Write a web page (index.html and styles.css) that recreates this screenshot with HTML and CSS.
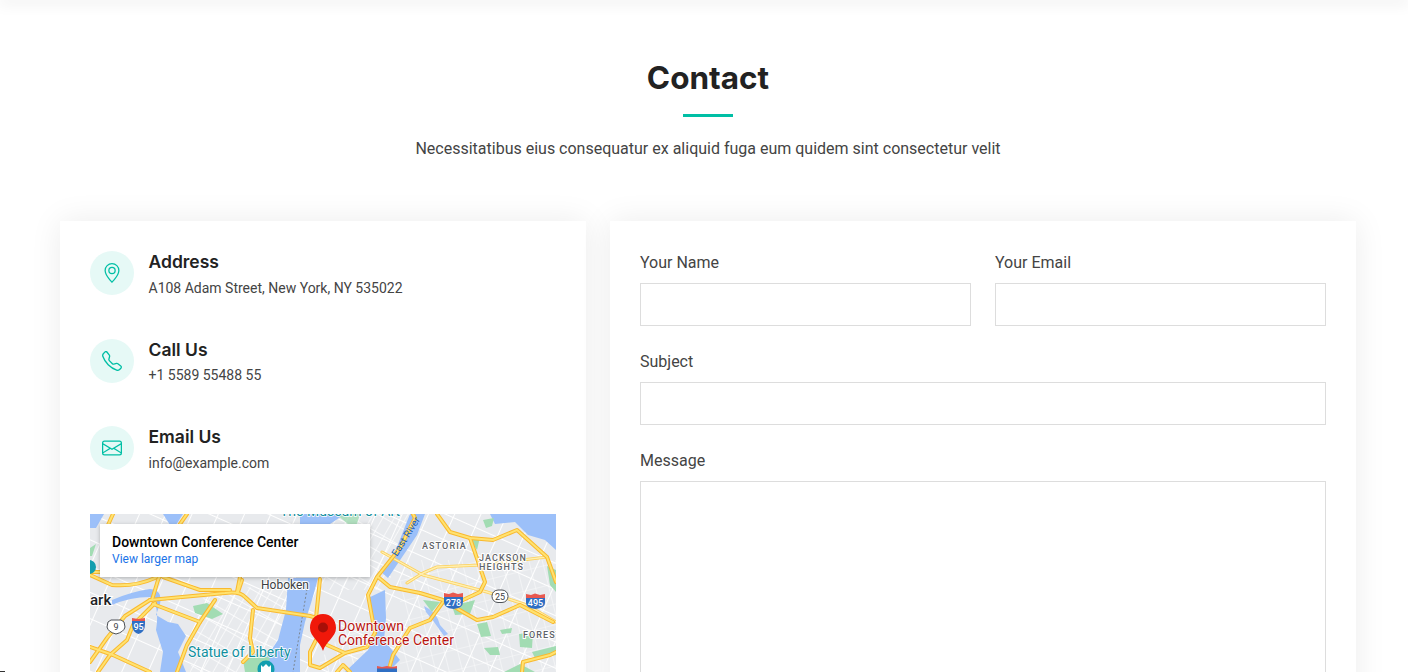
FILE: index.html
```html
<!DOCTYPE html>
<html lang="en">
<head>
<meta charset="utf-8">
<title>Contact</title>
<link rel="stylesheet" href="styles.css">
</head>
<body>
<div class="topbar"></div>
<section class="contact">
  <header class="section-title">
    <h2>Contact</h2>
    <p>Necessitatibus eius consequatur ex aliquid fuga eum quidem sint consectetur velit</p>
  </header>
  <div class="columns">
    <div class="card info">
      <div class="info-item">
        <span class="icon-circle"><svg viewBox="0 0 16 16" class="icon"><path d="M12.166 8.94c-.524 1.062-1.234 2.12-1.96 3.07A31.493 31.493 0 0 1 8 14.58a31.481 31.481 0 0 1-2.206-2.57c-.726-.95-1.436-2.008-1.96-3.07C3.304 7.867 3 6.862 3 6a5 5 0 0 1 10 0c0 .862-.305 1.867-.834 2.94zM8 16s6-5.686 6-10A6 6 0 0 0 2 6c0 4.314 6 10 6 10z"/><path d="M8 8a2 2 0 1 1 0-4 2 2 0 0 1 0 4zm0 1a3 3 0 1 0 0-6 3 3 0 0 0 0 6z"/></svg></span>
        <div><h3>Address</h3><p>A108 Adam Street, New York, NY 535022</p></div>
      </div>
      <div class="info-item">
        <span class="icon-circle"><svg viewBox="0 0 16 16" class="icon"><path d="M3.654 1.328a.678.678 0 0 0-1.015-.063L1.605 2.3c-.483.484-.661 1.169-.45 1.77a17.568 17.568 0 0 0 4.168 6.608 17.569 17.569 0 0 0 6.608 4.168c.601.211 1.286.033 1.77-.45l1.034-1.034a.678.678 0 0 0-.063-1.015l-2.307-1.794a.678.678 0 0 0-.58-.122l-2.19.547a1.745 1.745 0 0 1-1.657-.459L5.482 8.062a1.745 1.745 0 0 1-.46-1.657l.548-2.19a.678.678 0 0 0-.122-.58L3.654 1.328zM1.884.511a1.745 1.745 0 0 1 2.612.163L6.29 2.98c.329.423.445.974.315 1.494l-.547 2.19a.678.678 0 0 0 .178.643l2.457 2.457a.678.678 0 0 0 .644.178l2.189-.547a1.745 1.745 0 0 1 1.494.315l2.306 1.794c.829.645.905 1.87.163 2.611l-1.034 1.034c-.74.74-1.846 1.065-2.877.702a18.634 18.634 0 0 1-7.01-4.42 18.634 18.634 0 0 1-4.42-7.009c-.362-1.03-.037-2.137.703-2.877L1.885.511z"/></svg></span>
        <div><h3>Call Us</h3><p>+1 5589 55488 55</p></div>
      </div>
      <div class="info-item">
        <span class="icon-circle"><svg viewBox="0 0 16 16" class="icon"><path d="M0 4a2 2 0 0 1 2-2h12a2 2 0 0 1 2 2v8a2 2 0 0 1-2 2H2a2 2 0 0 1-2-2V4Zm2-1a1 1 0 0 0-1 1v.217l7 4.2 7-4.2V4a1 1 0 0 0-1-1H2Zm13 2.383-4.708 2.825L15 11.105V5.383Zm-.034 6.876-5.64-3.471L8 9.583l-1.326-.795-5.64 3.47A1 1 0 0 0 2 13h12a1 1 0 0 0 .966-.741ZM1 11.105l4.708-2.897L1 5.383v5.722Z"/></svg></span>
        <div><h3>Email Us</h3><p>info@example.com</p></div>
      </div>
      <div class="map">
        <svg class="map-art" viewBox="90 514 466 158" width="466" height="158">
          <defs>
            <pattern id="gridA" width="24" height="24" patternUnits="userSpaceOnUse" patternTransform="rotate(24)"><path d="M0 0H24M0 0V24" stroke="#fff" stroke-width="2" fill="none"/></pattern>
            <pattern id="gridB" width="10" height="16" patternUnits="userSpaceOnUse" patternTransform="rotate(30)"><path d="M0 0H10M0 0V16" stroke="#fff" stroke-width="1.3" fill="none"/></pattern>
            <pattern id="gridC" width="13" height="20" patternUnits="userSpaceOnUse" patternTransform="rotate(-14)"><path d="M0 0H13M0 0V20" stroke="#fff" stroke-width="1.2" fill="none"/></pattern>
            <g id="roads" fill="none" stroke-linejoin="round" stroke-linecap="round">
              <path d="M90 575L112 585Q135 587 155 578L163 572"/>
              <path d="M150 600L225 593Q240 591 245 597L257 608L310 616L330 622"/>
              <path d="M152 600L158 580L170 555L173 535"/>
              <path d="M150 600L125 616L107 638L100 648L90 662"/>
              <path d="M155 603L133 625L127 640L110 655L98 672"/>
              <path d="M90 647L113 655L150 672"/>
              <path d="M153 604L200 622"/>
              <path d="M215 600L200 622L187 645L177 672"/>
              <path d="M163 577L200 590L230 590"/>
              <path d="M240 577L237 592"/>
              <path d="M253 610L250 638L253 652L243 662"/>
              <path d="M113 514L108 525"/>
              <path d="M187 514L180 524"/>
              <path d="M242 580L238 592"/>
              <path d="M320 579L316 618"/>
              <path d="M316 640L310 652L310 665L320 668L330 662L345 653"/>
              <path d="M327 645L345 653L367 647L375 633L372 617L368 595L377 577L400 548L415 518L413 514"/>
              <path d="M378 577L390 587L420 593L443 600L463 612L477 620L493 617L520 605L553 622"/>
              <path d="M443 602L430 620L410 628L393 655L388 672"/>
              <path d="M437 514L450 532L470 538L493 540L517 530L547 557L556 582"/>
              <path d="M470 538L485 582L480 592L463 600"/>
              <path d="M337 672L343 665L350 672"/>
              <path d="M522 672L523 662L550 655L556 652"/>
              <path d="M100 572H90"/>
            </g>
            <g id="thin" fill="none" stroke-linejoin="round" stroke-linecap="round">
              <path d="M407 583L423 573L437 567L480 565L547 557"/>
              <path d="M382 552L423 575L487 592L527 605L556 622"/>
            </g>
          </defs>
          <rect x="90" y="514" width="466" height="158" fill="#e8eaed"/>
          <rect x="90" y="514" width="466" height="158" fill="url(#gridA)"/>
          <path d="M205 590L290 585L295 672H190Z" fill="url(#gridB)"/>
          <path d="M300 514H420L385 590H320Z" fill="url(#gridB)"/>
          <path d="M400 560H556V672H400Z" fill="url(#gridC)" opacity=".75"/>
          <path d="M320 660L345 630L375 640L372 672H320Z" fill="url(#gridC)"/>
          <g fill="#9cc0f9">
            <path d="M288 578L318 578L312 600L305 622L300 645L300 672H250L262 664L278 640L286 610Z"/>
            <path d="M112 600Q130 592 150 589Q163 590 160 604L156 615L168 622L178 624L186 636L178 652L186 672H160L163 652L156 630Q160 605 150 597Q130 597 112 605Z"/>
            <path d="M163 514H183L176 525H170Z"/>
            <path d="M395 552L410 514H425L417 535L388 578L381 572Z"/>
            <path d="M368 598L385 590L386 618L384 640L400 660L388 672H345L368 650L376 632L372 610Z"/>
            <path d="M490 514H556V550L545 540L528 535L515 522L495 524Z"/>
            <path d="M90 514H104L96 528H90Z"/>
            <path d="M300 514H345L330 524H300Z"/>
            <path d="M424 606Q437 612 440 625L448 634L444 636L434 622L426 612Z" opacity=".9"/>
          </g>
          <g fill="#a2dcb3">
            <path d="M193 606L207 603L223 614L212 619L195 613Z"/>
            <path d="M243 660L256 654L270 658L262 672H245Z"/>
            <path d="M423 600L440 602L432 612Z"/>
            <path d="M452 606L475 600L470 614L455 615Z"/>
            <path d="M477 624L487 622L491 636L481 637Z"/>
            <path d="M500 630L512 628L511 633L502 634Z"/>
            <path d="M519 634L533 632L532 648L520 647Z"/>
            <path d="M484 648L498 647L500 655L490 655Z"/>
            <path d="M532 652L556 646V655L536 660Z"/>
            <path d="M547 566L556 570V592L550 585Z"/>
            <path d="M483 520L494 518L492 526L486 528Z"/>
            <path d="M90 548L96 544L92 556H90Z"/>
            <path d="M336 514H360L355 530Z" opacity=".8"/>
            <path d="M470 540L480 537L477 550Z"/>
            <path d="M504 672L520 664L535 672Z"/>
          </g>
          <path d="M307 589L293 672" stroke="#7b8794" stroke-width="1" stroke-dasharray="2 2" fill="none"/>
          <use href="#thin" stroke="#fcd05c" stroke-width="3"/>
          <use href="#thin" stroke="#ffefb0" stroke-width="1.4"/>
          <use href="#roads" stroke="#f9b92f" stroke-width="4"/>
          <use href="#roads" stroke="#ffe270" stroke-width="2"/>
          <circle cx="89" cy="567" r="7" fill="#129eaf"/>
          <g class="map-label-dark">
            <text x="261" y="589" class="t-town">Hoboken</text>
            <text x="90" y="605" class="t-city">ark</text>
            <text x="422" y="549" class="t-hood">ASTORIA</text>
            <text x="479" y="561" class="t-hood">JACKSON</text>
            <text x="479" y="570" class="t-hood">HEIGHTS</text>
            <text x="523" y="638" class="t-hood">FOREST</text>
          </g>
          <text x="280" y="516" class="t-poi">The Museum of Art</text>
          <text x="188" y="657" class="t-poi">Statue of Liberty</text>
          <text transform="translate(397 557) rotate(-58)" class="t-water">East River</text>
          <circle cx="266" cy="669" r="8.5" fill="#129eaf"/>
          <path d="M261 672V665L263 667L266 664L269 667L271 665V672Z" fill="#fff"/>
          <g class="shield-i">
            <path d="M132 621Q138 619 145 621V624Q145 632 138.500 634Q132 632 132 624Z" fill="#2f6fc4"/>
            <path d="M132 618L138 619L145 618V621H132Z" fill="#e8584f"/>
            <text x="138.500" y="630" class="t-sh">95</text>
            <path d="M444 597H463V602Q463 608 453.500 609Q444 608 444 602Z" fill="#2f6fc4"/>
            <path d="M444 593L449 594L453 592.500L458 594L463 593V597H444Z" fill="#e8584f"/>
            <text x="453.500" y="606" class="t-sh">278</text>
            <path d="M526 598H545V603Q545 608 535.500 609Q526 608 526 603Z" fill="#2f6fc4"/>
            <path d="M526 594L531 595L535 593.500L540 595L545 594V598H526Z" fill="#e8584f"/>
            <text x="535.500" y="606" class="t-sh">495</text>
            <path d="M377 668H397V672H377Z" fill="#2f6fc4"/>
            <path d="M377 666L382 667L387 666L392 667L397 666V668.500H377Z" fill="#e8584f"/>
          </g>
          <path d="M108 622L111 620H121L124 622L125 627Q124 632 116 634Q108 632 107 627Z" fill="#fff" stroke="#4d5156"/>
          <text x="116" y="630" class="t-rt">9</text>
          <rect x="492" y="590" width="16" height="12.500" rx="6" fill="#fff" stroke="#4d5156"/>
          <text x="500" y="600" class="t-rt">25</text>
          <path d="M323 614C315 614 310 620 310 628C310 637 320 641 323 651C326 641 336 637 336 628C336 620 331 614 323 614Z" fill="#f0180a"/>
          <circle cx="323" cy="627.500" r="5" fill="#a80f08"/>
          <text class="t-pin"><tspan x="338" y="631">Downtown</tspan><tspan x="338" y="645">Conference Center</tspan></text>
        </svg>
        <div class="map-box">
          <strong>Downtown Conference Center</strong>
          <a href="#">View larger map</a>
        </div>
      </div>
    </div>
    <form class="card form">
      <div class="form-row">
        <div class="field"><label for="n">Your Name</label><input id="n" type="text"></div>
        <div class="field"><label for="e">Your Email</label><input id="e" type="email"></div>
      </div>
      <div class="field"><label for="s">Subject</label><input id="s" type="text"></div>
      <div class="field"><label for="m">Message</label><textarea id="m"></textarea></div>
    </form>
  </div>
</section>
<div class="corner"></div>
</body>
</html>
```
FILE: styles.css
```css
* { box-sizing: border-box; }
html, body { height: 100%; overflow: hidden; }
body { margin: 0; background: #fff; color: #444; font-family: Roboto, "Liberation Sans", sans-serif; font-size: 16px; }

.topbar { height: 0; box-shadow: 0 0 15px 2px rgba(0, 0, 0, .14); }

.contact { padding: 58px 52px 0 60px; }
.section-title { text-align: center; }
.section-title h2 {
  margin: 0;
  padding-bottom: 20px;
  font: 700 31.500px/40px Inter, "Liberation Sans", sans-serif;
  color: #222;
}
.section-title h2::after {
  content: "";
  display: block;
  width: 50px;
  height: 3px;
  margin: 16px auto 0;
  background: #00bfa5;
}
.section-title p { margin: 0; line-height: 24px; }

.columns { display: grid; grid-template-columns: 526px 746px; gap: 24px; margin-top: 60px; }
.card { background: #fff; box-shadow: 0 0 30px rgba(0, 0, 0, .08); padding: 30px; }

.info-item { display: flex; gap: 14.500px; margin-bottom: 40px; }
.info-item h3 { margin: 0 0 5px; font: 600 17.500px/21.600px Inter, "Liberation Sans", sans-serif; color: #222; }
.info-item p { margin: 0; font-size: 14px; line-height: 21px; }
.icon-circle {
  flex: none;
  width: 44px;
  height: 44px;
  border-radius: 50%;
  background: #e6f9f6;
  display: flex;
  align-items: center;
  justify-content: center;
}
.icon { width: 20px; height: 20px; fill: #00bfa5; }

.map { position: relative; height: 290px; overflow: hidden; }
.map-art { display: block; }
.map-box {
  position: absolute;
  left: 10px;
  top: 10px;
  width: 270px;
  height: 53px;
  padding: 10px 12px;
  background: #fff;
  box-shadow: 0 1px 4px rgba(0, 0, 0, .25);
  display: flex;
  flex-direction: column;
}
.map-box strong { font-size: 14px; line-height: 16px; font-weight: 500; color: #000; }
.map-box a { font-size: 12px; line-height: 18px; color: #1a73e8; text-decoration: none; }

.map-art text { font-family: Roboto, "Liberation Sans", sans-serif; }
.t-town { font-size: 12px; fill: #3c4043; stroke: #fff; stroke-width: 2px; paint-order: stroke; }
.t-city { font-size: 15px; font-weight: 500; fill: #202124; stroke: #fff; stroke-width: 2px; paint-order: stroke; }
.t-hood { font-size: 9px; font-weight: 500; letter-spacing: 1.100px; fill: #5f6368; stroke: #fff; stroke-width: 2px; paint-order: stroke; }
.t-poi { font-size: 14px; fill: #0f8f9e; stroke: #fff; stroke-width: 1.500px; paint-order: stroke; }
.t-water { font-size: 10px; fill: #1a5fb4; }
.t-pin { font-size: 14px; fill: #b8130f; stroke: #fff; stroke-width: 1.500px; paint-order: stroke; }
.t-sh { font-size: 9px; font-weight: 500; fill: #fff; text-anchor: middle; }
.t-rt { font-size: 9px; fill: #3c4043; text-anchor: middle; }

.form-row { display: grid; grid-template-columns: 331px 331px; gap: 24px; }
.field { margin-bottom: 24px; }
.field label { display: block; height: 24px; margin-bottom: 8px; line-height: 24px; }
.field input, .field textarea {
  display: block;
  width: 100%;
  height: 43px;
  border: 1px solid #ddd;
  border-radius: 0;
  background: #fff;
  outline: 0;
}
.field textarea { height: 290px; resize: none; }

.corner { position: fixed; left: 0; bottom: 0; width: 5px; height: 1px; background: #333; }
```
